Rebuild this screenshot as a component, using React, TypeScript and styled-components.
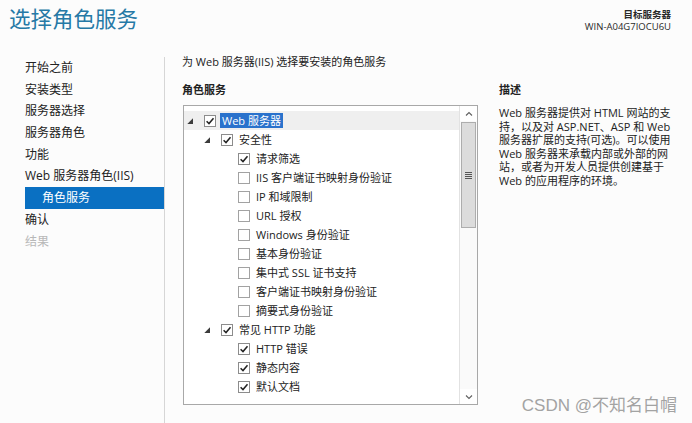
import React from "react";
import styled, { createGlobalStyle } from "styled-components";

const GlobalStyle = createGlobalStyle`
    html, body {
        margin: 0;
        padding: 0;
        background: #fcfcfc;
    }
    body {
        font-family: "Segoe UI", "Open Sans", "Noto Sans CJK SC", sans-serif;
        color: #1e1e1e;
    }
`;

const Page = styled.div`
    position: relative;
    width: 692px;
    height: 423px;
    overflow: hidden;
    display: flex;
    flex-direction: column;
    background: #fcfcfc;
`;

const Header = styled.div`
    height: 56px;
    box-sizing: border-box;
    display: flex;
    justify-content: space-between;
    align-items: flex-start;
    padding: 4px 21px 0 9px;
`;

const Title = styled.h1`
    margin: 0;
    font-size: 21.5px;
    font-weight: 400;
    line-height: 28px;
    color: #2679a6;
    font-family: "Noto Sans CJK SC", sans-serif;
`;

const Target = styled.div`
    margin-top: 5px;
    text-align: right;
    font-size: 9.5px;
    line-height: 11.5px;
    color: #2a2a2a;
`;

const TargetLabel = styled.div`
    font-weight: 700;
    font-family: "Noto Sans CJK SC", sans-serif;
`;

const Body = styled.div`
    flex: 1;
    display: flex;
    min-height: 0;
`;

const Nav = styled.nav`
    width: 165px;
    box-sizing: border-box;
    border-right: 1px solid #d6d6d6;
    margin-top: 1px;
`;

const NavItem = styled.div<{ $active?: boolean; $disabled?: boolean; $sub?: boolean }>`
    margin-left: 25px;
    height: 21.7px;
    line-height: 21.7px;
    font-size: 12px;
    padding-left: ${({ $sub }) => ($sub ? 17 : 0)}px;
    color: ${({ $active, $disabled }) => ($active ? "#fff" : $disabled ? "#b8b8b8" : "#222")};
    background: ${({ $active }) => ($active ? "#0a70c2" : "transparent")};
    white-space: nowrap;
`;

const Content = styled.div`
    flex: 1;
    padding-left: 17px;
`;

const Intro = styled.div`
    font-size: 11px;
    line-height: 14px;
    margin-top: -1px;
    color: #222;
`;

const Columns = styled.div`
    display: flex;
    gap: 21px;
    margin-top: 13px;
`;

const Section = styled.div<{ $width: number }>`
    width: ${({ $width }) => $width}px;
    flex-shrink: 0;
`;

const Heading = styled.div`
    font-size: 11px;
    font-weight: 700;
    line-height: 14px;
    color: #222;
    font-family: "Noto Sans CJK SC", sans-serif;
`;

const TreeBox = styled.div`
    margin-top: 9px;
    margin-left: 1px;
    width: 295px;
    height: 300px;
    box-sizing: border-box;
    border: 1px solid #a8a8a8;
    background: #fff;
    display: flex;
`;

const TreeList = styled.div`
    flex: 1;
    overflow: hidden;
    margin-bottom: 4px;
    padding-top: 5px;
`;

const Row = styled.div<{ $level: number; $hover?: boolean }>`
    height: 19px;
    display: flex;
    align-items: center;
    padding-left: ${({ $level }) => 3 + $level * 17}px;
    background: ${({ $hover }) => ($hover ? "#efefef" : "transparent")};
    font-size: 11px;
    white-space: nowrap;
`;

const ToggleSlot = styled.span`
    width: 17px;
    height: 19px;
    flex-shrink: 0;
    display: flex;
    align-items: center;
`;

const Box = styled.span<{ $checked: boolean }>`
    width: 12px;
    height: 12px;
    box-sizing: border-box;
    border: 1px solid ${({ $checked }) => ($checked ? "#8c8c8c" : "#a2a2a2")};
    background: #fff;
    display: flex;
    align-items: center;
    justify-content: center;
    flex-shrink: 0;
`;

const Label = styled.span<{ $selected?: boolean }>`
    margin-left: ${({ $selected }) => ($selected ? 4 : 6)}px;
    padding: 0 ${({ $selected }) => ($selected ? 2 : 0)}px;
    line-height: 15px;
    color: ${({ $selected }) => ($selected ? "#fff" : "#222")};
    background: ${({ $selected }) => ($selected ? "#2a72cc" : "transparent")};
`;

const Scrollbar = styled.div`
    width: 17px;
    display: flex;
    flex-direction: column;
    background: #fafafa;
    border-left: 1px solid #e2e2e2;
`;

const ScrollButton = styled.div`
    height: 15px;
    display: flex;
    align-items: center;
    justify-content: center;
    background: #fff;
`;

const Thumb = styled.div`
    margin: 1px 1px 0 1px;
    height: 106px;
    box-sizing: border-box;
    background: #dcdcdc;
    border: 1px solid #adadad;
    display: flex;
    align-items: center;
    justify-content: center;
`;

const Track = styled.div`
    flex: 1;
`;

const Description = styled.p`
    margin: 10px 0 0 0;
    font-size: 11px;
    line-height: 13.6px;
    color: #222;
    white-space: nowrap;
`;

const Watermark = styled.div`
    position: absolute;
    right: 15px;
    bottom: 7px;
    font-size: 17px;
    color: #a3a3a3;
    font-family: "Liberation Sans", "Noto Sans CJK SC", sans-serif;
`;

const Triangle = () => (
    <svg width="6" height="6" viewBox="0 0 6 6">
        <polygon points="6,0.3 6,6 0.3,6" fill="#3c3c3c" />
    </svg>
);

const Check = () => (
    <svg width="10" height="10" viewBox="0 0 10 10">
        <path d="M1.6 5.2 L4 7.6 L8.5 2.2" fill="none" stroke="#222" strokeWidth="1.5" />
    </svg>
);

const Chevron = ({ up }: { up: boolean }) => (
    <svg width="8" height="6" viewBox="0 0 8 6">
        <path d={up ? "M1 4.5 L4 1.5 L7 4.5" : "M1 1.5 L4 4.5 L7 1.5"} fill="none" stroke="#606060" strokeWidth="1.1" />
    </svg>
);

const Grip = () => (
    <svg width="7" height="7" viewBox="0 0 7 7">
        <rect x="0" y="0" width="7" height="1" fill="#555" />
        <rect x="0" y="2" width="7" height="1" fill="#555" />
        <rect x="0" y="4" width="7" height="1" fill="#555" />
        <rect x="0" y="6" width="7" height="1" fill="#555" />
    </svg>
);

type Node = {
    label: string;
    level: number;
    checked: boolean;
    expandable?: boolean;
    selected?: boolean;
};

const nodes: Node[] = [
    { label: "Web 服务器", level: 0, checked: true, expandable: true, selected: true },
    { label: "安全性", level: 1, checked: true, expandable: true },
    { label: "请求筛选", level: 2, checked: true },
    { label: "IIS 客户端证书映射身份验证", level: 2, checked: false },
    { label: "IP 和域限制", level: 2, checked: false },
    { label: "URL 授权", level: 2, checked: false },
    { label: "Windows 身份验证", level: 2, checked: false },
    { label: "基本身份验证", level: 2, checked: false },
    { label: "集中式 SSL 证书支持", level: 2, checked: false },
    { label: "客户端证书映射身份验证", level: 2, checked: false },
    { label: "摘要式身份验证", level: 2, checked: false },
    { label: "常见 HTTP 功能", level: 1, checked: true, expandable: true },
    { label: "HTTP 错误", level: 2, checked: true },
    { label: "静态内容", level: 2, checked: true },
    { label: "默认文档", level: 2, checked: true },
    { label: "目录浏览", level: 2, checked: true },
];

const steps = ["开始之前", "安装类型", "服务器选择", "服务器角色", "功能", "Web 服务器角色(IIS)"];

export default function App() {
    return (
        <Page>
            <GlobalStyle />
            <Header>
                <Title>选择角色服务</Title>
                <Target>
                    <TargetLabel>目标服务器</TargetLabel>
                    <div>WIN-A04G7IOCU6U</div>
                </Target>
            </Header>
            <Body>
                <Nav>
                    {steps.map((s) => (
                        <NavItem key={s}>{s}</NavItem>
                    ))}
                    <NavItem $active $sub>角色服务</NavItem>
                    <NavItem>确认</NavItem>
                    <NavItem $disabled>结果</NavItem>
                </Nav>
                <Content>
                    <Intro>为 Web 服务器(IIS) 选择要安装的角色服务</Intro>
                    <Columns>
                        <Section $width={296}>
                            <Heading>角色服务</Heading>
                            <TreeBox>
                                <TreeList>
                                    {nodes.map((n) => (
                                        <Row key={n.label} $level={n.level} $hover={n.selected}>
                                            <ToggleSlot>{n.expandable && <Triangle />}</ToggleSlot>
                                            <Box $checked={n.checked}>{n.checked && <Check />}</Box>
                                            <Label $selected={n.selected}>{n.label}</Label>
                                        </Row>
                                    ))}
                                </TreeList>
                                <Scrollbar>
                                    <ScrollButton>
                                        <Chevron up />
                                    </ScrollButton>
                                    <Thumb>
                                        <Grip />
                                    </Thumb>
                                    <Track />
                                    <ScrollButton>
                                        <Chevron up={false} />
                                    </ScrollButton>
                                </Scrollbar>
                            </TreeBox>
                        </Section>
                        <Section $width={180}>
                            <Heading>描述</Heading>
                            <Description>
                                Web 服务器提供对 HTML 网站的支
                                <br />
                                持，以及对 ASP.NET、ASP 和 Web
                                <br />
                                服务器扩展的支持(可选)。可以使用
                                <br />
                                Web 服务器来承载内部或外部的网
                                <br />
                                站，或者为开发人员提供创建基于
                                <br />
                                Web 的应用程序的环境。
                            </Description>
                        </Section>
                    </Columns>
                </Content>
            </Body>
            <Watermark>CSDN @不知名白帽</Watermark>
        </Page>
    );
}
